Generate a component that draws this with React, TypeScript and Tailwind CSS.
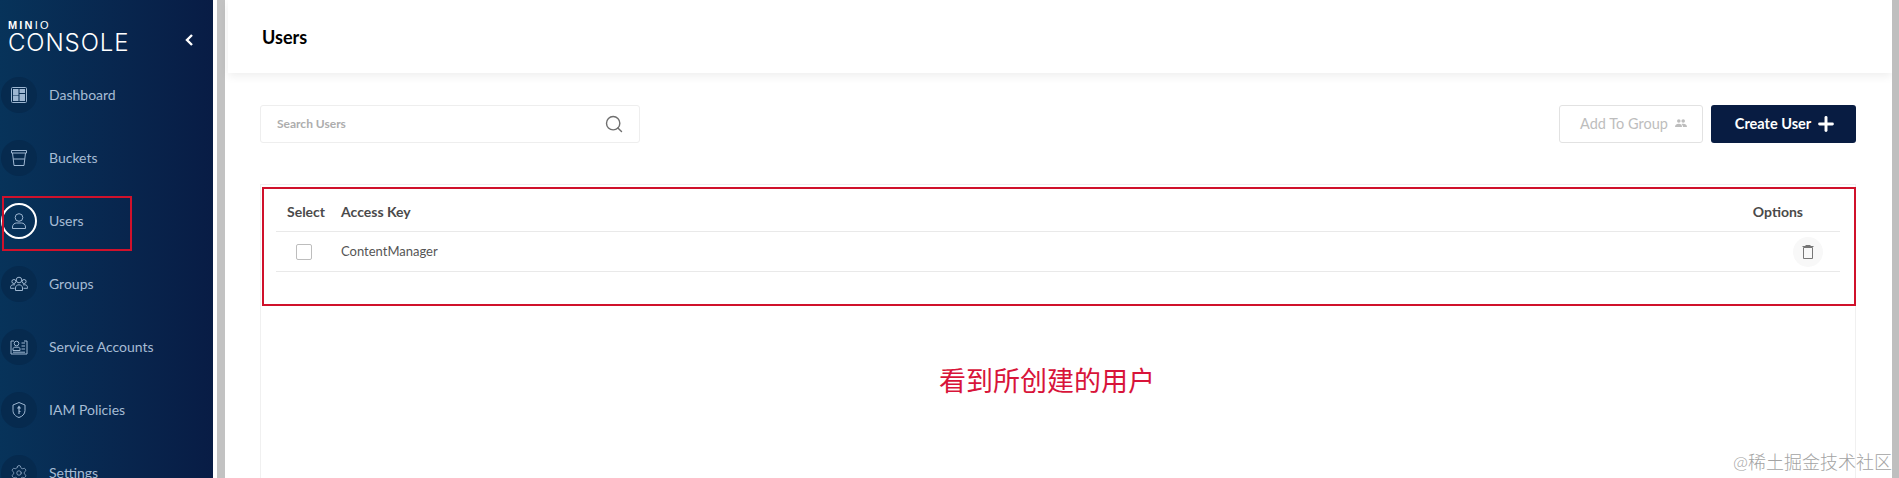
import { Plus, Search, Settings } from 'lucide-react';
import type { ReactNode } from 'react';

const iconProps = {
  width: 18,
  height: 18,
  viewBox: '0 0 18 18',
  fill: 'none',
  stroke: 'currentColor',
  strokeWidth: 1,
};

const DashboardIcon = () => (
  <svg {...iconProps}>
    <rect x="1.5" y="1.5" width="15" height="15" rx="1" />
    <rect x="3.5" y="3.5" width="4.5" height="5" fill="currentColor" />
    <rect x="10" y="3.5" width="4.5" height="3" fill="currentColor" />
    <rect x="3.5" y="10" width="4.5" height="4.5" fill="currentColor" />
    <rect x="10" y="8.5" width="4.5" height="6" fill="currentColor" />
  </svg>
);

const BucketIcon = () => (
  <svg {...iconProps}>
    <path d="M1.500 1.500h15v2.500h-15zM2.500 4 4 16.500h10l1.500-12.500M3.200 10h11.600" />
  </svg>
);

const UserIcon = () => (
  <svg {...iconProps}>
    <circle cx="9" cy="5.500" r="3.800" />
    <path d="M2.500 16.500v-1.500c0-2.500 2-4 4-4h5c2 0 4 1.500 4 4v1.500z" />
  </svg>
);

const GroupIcon = () => (
  <svg {...iconProps}>
    <circle cx="9" cy="5" r="2.800" />
    <circle cx="3.900" cy="6.500" r="2" />
    <circle cx="14.100" cy="6.500" r="2" />
    <path d="M5.500 15.500v-2.500c0-2 1.500-3.200 3.500-3.200s3.500 1.200 3.500 3.200v2.500zM5 9.800H3c-1.300 0-2.500 1-2.500 2.500v1h4M13 9.800h2c1.300 0 2.500 1 2.500 2.500v1h-4" />
  </svg>
);

const AccountIcon = () => (
  <svg {...iconProps}>
    <path d="M4 3H1v13h16V3h-3" />
    <circle cx="6.500" cy="5.500" r="2.300" />
    <path d="M3 12.500v-1.500c0-1.200 1-1.800 2-1.800h3c1 0 2 .6 2 1.800v1.500zM11.500 5H15M11.500 8H15M11.500 11H15M3 14.200h12" />
  </svg>
);

const ShieldIcon = () => (
  <svg {...iconProps}>
    <path d="M9 1.500 15 4v5.500c0 3.500-2.700 6-6 7-3.300-1-6-3.500-6-7V4z" />
    <path d="M9 5v8M7.500 7.500 9 5.500l1.500 2M9 10.500h1.500" strokeWidth="1.200" />
  </svg>
);

const TrashIcon = () => (
  <svg width="12" height="14" viewBox="0 0 12 14" fill="none" stroke="#777777" strokeWidth="1">
    <path d="M1.500 2.500h9v11h-9zM.5 1.500h11M3.500.5h5" />
  </svg>
);

const AddGroupIcon = () => (
  <svg width="12" height="9" viewBox="0 0 12 9" fill="#bdbdbd">
    <circle cx="3.800" cy="2" r="1.800" />
    <circle cx="8.200" cy="2" r="1.800" />
    <path d="M0 8c0-2 1.800-3.200 3.800-3.200S7 6 7 8zM6.500 4.900c.6-.1 1.100-.1 1.700-.1 2 0 3.800 1.200 3.800 3.200H8c0-1.200-.5-2.300-1.500-3.100z" />
  </svg>
);

const navItems: { label: string; icon: ReactNode; active?: boolean }[] = [
  { label: 'Dashboard', icon: <DashboardIcon /> },
  { label: 'Buckets', icon: <BucketIcon /> },
  { label: 'Users', icon: <UserIcon />, active: true },
  { label: 'Groups', icon: <GroupIcon /> },
  { label: 'Service Accounts', icon: <AccountIcon /> },
  { label: 'IAM Policies', icon: <ShieldIcon /> },
  { label: 'Settings', icon: <Settings size={18} strokeWidth={1} /> },
];

export default function App() {
  return (
    <div className="relative flex h-[478px] w-[1899px] overflow-hidden bg-white font-['Lato','Noto_Sans_CJK_SC',sans-serif]">
      {/* Sidebar */}
      <aside className="h-full w-[213px] shrink-0 bg-gradient-to-r from-[#07335a] to-[#081c45]">
        <div className="flex h-[63px] items-start justify-between pl-[8px] pr-[19px] pt-[20px]">
          <div className="text-white">
            <div className="font-['Liberation_Sans',sans-serif] text-[11px] font-bold leading-[11px] tracking-[2.200px]">
              MIN<span className="font-normal">IO</span>
            </div>
            <div className="mt-[2px] font-['Inter',sans-serif] text-[24px] font-light leading-[20px] tracking-[0.900px]">CONSOLE</div>
          </div>
          <svg width="10" height="14" viewBox="0 0 10 14" fill="none" stroke="white" strokeWidth="2.400" className="mt-[13px]">
            <path d="M8 2 3 7l5 5" />
          </svg>
        </div>
        <nav>
          {navItems.map((item) => (
            <div key={item.label} className="flex h-[63px] items-center">
              <div
                className={`ml-[1px] flex h-[36px] w-[36px] items-center justify-center rounded-full text-[#9db6d1] ${
                  item.active ? 'border-2 border-white' : 'bg-[#062a4e]'
                }`}
              >
                {item.icon}
              </div>
              <span className="ml-[12px] text-[14px] text-[#a6bcd4]">{item.label}</span>
            </div>
          ))}
        </nav>
      </aside>

      {/* Gutter */}
      <div className="h-full w-[4px] shrink-0 bg-white" />
      <div className="h-full w-[8px] shrink-0 bg-[#c2c2c2]" />

      {/* Main */}
      <main className="flex h-full min-w-0 flex-1 flex-col bg-white pl-[3px]">
        <header className="flex h-[73px] shrink-0 items-center bg-white pl-[34px] pt-[1px] text-[18px] font-bold text-black shadow-[0_3px_9px_rgba(0,0,0,0.07)]">
          Users
        </header>
        <div className="flex flex-1 flex-col pl-[32px] pr-[36px] pt-[32px]">
          <div className="flex items-center justify-between">
            <div className="flex h-[38px] w-[380px] items-center justify-between rounded-[3px] border border-[#eeeeee] bg-white pl-[16px] pr-[15px]">
              <span className="text-[12px] font-bold text-[#adadad]">Search Users</span>
              <Search size={20} strokeWidth={1.700} className="text-[#6f6f6f]" />
            </div>
            <div className="flex gap-[8px]">
              <button className="flex h-[38px] w-[144px] items-center justify-center gap-[7px] rounded-[3px] border border-[#e2e2e2] bg-white pb-[1px] pl-[5px] text-[14.500px] text-[#bdbdbd]">
                Add To Group
                <AddGroupIcon />
              </button>
              <button className="flex h-[38px] w-[145px] items-center justify-center gap-[4px] rounded-[3px] bg-[#081c42] pb-[1px] pl-[5px] text-[14.500px] font-bold text-white">
                Create User
                <Plus size={22} strokeWidth={3.200} />
              </button>
            </div>
          </div>

          {/* Table */}
          <div className="mt-[41px] flex-1 border border-b-0 border-[#f0f0f0] bg-white px-[15px]">
            <div className="flex h-[47px] items-center border-b border-[#e9e9e9] pt-[6px] text-[14px] font-bold text-[#4a4a4a]">
              <span className="ml-[11px] w-[54px]">Select</span>
              <span className="flex-1">Access Key</span>
              <span className="mr-[37px]">Options</span>
            </div>
            <div className="flex h-[40px] items-center border-b border-[#e9e9e9]">
              <div className="ml-[20px] h-[16px] w-[16px] rounded-[2px] border border-[#bdbdbd] bg-white" />
              <span className="ml-[29px] flex-1 text-[13px] text-[#555555]">ContentManager</span>
              <div className="mr-[17px] flex h-[30px] w-[30px] items-center justify-center rounded-full bg-[#f8f8f8]">
                <TrashIcon />
              </div>
            </div>
          </div>
        </div>
      </main>

      {/* Right scrollbar */}
      <div className="h-full w-[7px] shrink-0 bg-[#bfbfbf]" />

      {/* Annotations */}
      <div className="absolute left-[2px] top-[196px] h-[55px] w-[130px] border-2 border-[#d0112b]" />
      <div className="absolute left-[262px] top-[187px] h-[119px] w-[1594px] border-2 border-[#d0112b]" />
      <div className="absolute left-[939px] top-[363px] text-[27px] leading-[36px] text-[#d8143a]">看到所创建的用户</div>
      <div className="absolute left-[1733px] top-[450px] text-[18px] font-light leading-[24px] text-[#a3a3a3]">@稀土掘金技术社区</div>
    </div>
  );
}
